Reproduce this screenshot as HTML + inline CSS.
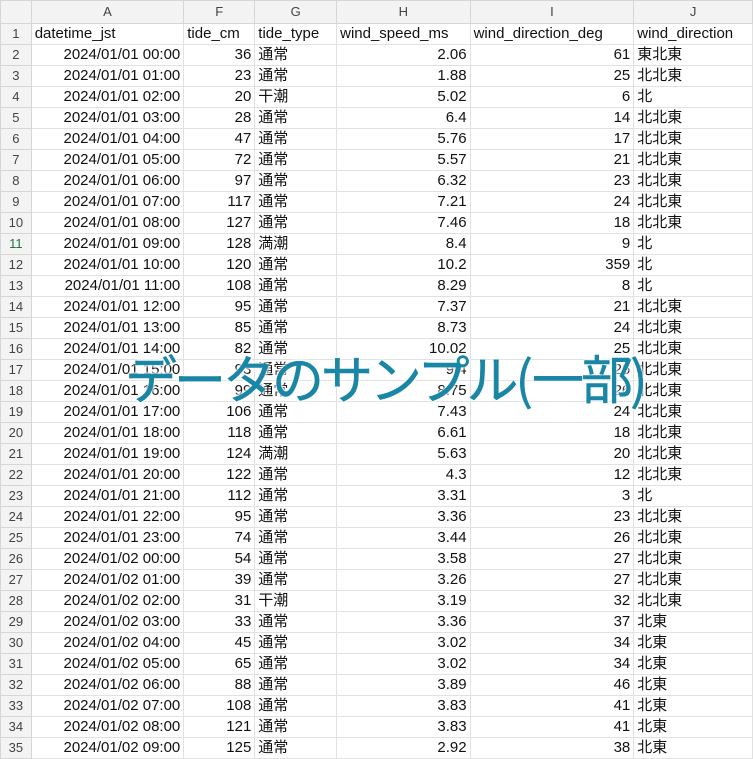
<!DOCTYPE html><html><head><meta charset="utf-8"><style>
body{margin:0;width:753px;height:753px;overflow:hidden;background:#fff;font-family:"Liberation Sans","Noto Sans CJK JP",sans-serif;position:relative}
table{border-collapse:collapse;table-layout:fixed;position:absolute;left:0;top:0}
td{height:20px;padding:0 3px;border:1px solid #e1e1e1;font-size:15px;color:#111;white-space:nowrap;overflow:hidden;line-height:20px}
td.n{background:#f3f3f3;color:#444;font-size:13px;padding:0;border-color:#d6d6d6;text-align:center}
tr.h td{height:22px;background:#f3f3f3;color:#444;font-size:13px;text-align:center;border-color:#d6d6d6}
.r{text-align:right}
.ov{position:absolute;left:125px;top:342px;font-size:52px;color:#1a86a6;font-family:"Noto Sans CJK JP",sans-serif;white-space:nowrap;letter-spacing:-3px;line-height:70px;-webkit-text-stroke:0.5px #1a86a6;text-shadow:0 0 3px #fff,0 0 3px #fff,0 0 4px #fff}
.p{letter-spacing:-1px}
</style></head><body>
<table>
<colgroup><col style="width:32px"><col style="width:155px"><col style="width:72px"><col style="width:83px"><col style="width:135px"><col style="width:166px"><col style="width:120px"></colgroup>
<tr class="h"><td></td><td>A</td><td>F</td><td>G</td><td>H</td><td>I</td><td>J</td></tr>
<tr><td class="n">1</td><td>datetime_jst</td><td>tide_cm</td><td>tide_type</td><td>wind_speed_ms</td><td>wind_direction_deg</td><td>wind_direction</td></tr>
<tr><td class="n">2</td><td class="r">2024/01/01 00:00</td><td class="r">36</td><td>通常</td><td class="r">2.06</td><td class="r">61</td><td>東北東</td></tr>
<tr><td class="n">3</td><td class="r">2024/01/01 01:00</td><td class="r">23</td><td>通常</td><td class="r">1.88</td><td class="r">25</td><td>北北東</td></tr>
<tr><td class="n">4</td><td class="r">2024/01/01 02:00</td><td class="r">20</td><td>干潮</td><td class="r">5.02</td><td class="r">6</td><td>北</td></tr>
<tr><td class="n">5</td><td class="r">2024/01/01 03:00</td><td class="r">28</td><td>通常</td><td class="r">6.4</td><td class="r">14</td><td>北北東</td></tr>
<tr><td class="n">6</td><td class="r">2024/01/01 04:00</td><td class="r">47</td><td>通常</td><td class="r">5.76</td><td class="r">17</td><td>北北東</td></tr>
<tr><td class="n">7</td><td class="r">2024/01/01 05:00</td><td class="r">72</td><td>通常</td><td class="r">5.57</td><td class="r">21</td><td>北北東</td></tr>
<tr><td class="n">8</td><td class="r">2024/01/01 06:00</td><td class="r">97</td><td>通常</td><td class="r">6.32</td><td class="r">23</td><td>北北東</td></tr>
<tr><td class="n">9</td><td class="r">2024/01/01 07:00</td><td class="r">117</td><td>通常</td><td class="r">7.21</td><td class="r">24</td><td>北北東</td></tr>
<tr><td class="n">10</td><td class="r">2024/01/01 08:00</td><td class="r">127</td><td>通常</td><td class="r">7.46</td><td class="r">18</td><td>北北東</td></tr>
<tr><td class="n" style="color:#217346">11</td><td class="r">2024/01/01 09:00</td><td class="r">128</td><td>満潮</td><td class="r">8.4</td><td class="r">9</td><td>北</td></tr>
<tr><td class="n">12</td><td class="r">2024/01/01 10:00</td><td class="r">120</td><td>通常</td><td class="r">10.2</td><td class="r">359</td><td>北</td></tr>
<tr><td class="n">13</td><td class="r">2024/01/01 11:00</td><td class="r">108</td><td>通常</td><td class="r">8.29</td><td class="r">8</td><td>北</td></tr>
<tr><td class="n">14</td><td class="r">2024/01/01 12:00</td><td class="r">95</td><td>通常</td><td class="r">7.37</td><td class="r">21</td><td>北北東</td></tr>
<tr><td class="n">15</td><td class="r">2024/01/01 13:00</td><td class="r">85</td><td>通常</td><td class="r">8.73</td><td class="r">24</td><td>北北東</td></tr>
<tr><td class="n">16</td><td class="r">2024/01/01 14:00</td><td class="r">82</td><td>通常</td><td class="r">10.02</td><td class="r">25</td><td>北北東</td></tr>
<tr><td class="n">17</td><td class="r">2024/01/01 15:00</td><td class="r">93</td><td>通常</td><td class="r">9.4</td><td class="r">26</td><td>北北東</td></tr>
<tr><td class="n">18</td><td class="r">2024/01/01 16:00</td><td class="r">99</td><td>通常</td><td class="r">8.75</td><td class="r">26</td><td>北北東</td></tr>
<tr><td class="n">19</td><td class="r">2024/01/01 17:00</td><td class="r">106</td><td>通常</td><td class="r">7.43</td><td class="r">24</td><td>北北東</td></tr>
<tr><td class="n">20</td><td class="r">2024/01/01 18:00</td><td class="r">118</td><td>通常</td><td class="r">6.61</td><td class="r">18</td><td>北北東</td></tr>
<tr><td class="n">21</td><td class="r">2024/01/01 19:00</td><td class="r">124</td><td>満潮</td><td class="r">5.63</td><td class="r">20</td><td>北北東</td></tr>
<tr><td class="n">22</td><td class="r">2024/01/01 20:00</td><td class="r">122</td><td>通常</td><td class="r">4.3</td><td class="r">12</td><td>北北東</td></tr>
<tr><td class="n">23</td><td class="r">2024/01/01 21:00</td><td class="r">112</td><td>通常</td><td class="r">3.31</td><td class="r">3</td><td>北</td></tr>
<tr><td class="n">24</td><td class="r">2024/01/01 22:00</td><td class="r">95</td><td>通常</td><td class="r">3.36</td><td class="r">23</td><td>北北東</td></tr>
<tr><td class="n">25</td><td class="r">2024/01/01 23:00</td><td class="r">74</td><td>通常</td><td class="r">3.44</td><td class="r">26</td><td>北北東</td></tr>
<tr><td class="n">26</td><td class="r">2024/01/02 00:00</td><td class="r">54</td><td>通常</td><td class="r">3.58</td><td class="r">27</td><td>北北東</td></tr>
<tr><td class="n">27</td><td class="r">2024/01/02 01:00</td><td class="r">39</td><td>通常</td><td class="r">3.26</td><td class="r">27</td><td>北北東</td></tr>
<tr><td class="n">28</td><td class="r">2024/01/02 02:00</td><td class="r">31</td><td>干潮</td><td class="r">3.19</td><td class="r">32</td><td>北北東</td></tr>
<tr><td class="n">29</td><td class="r">2024/01/02 03:00</td><td class="r">33</td><td>通常</td><td class="r">3.36</td><td class="r">37</td><td>北東</td></tr>
<tr><td class="n">30</td><td class="r">2024/01/02 04:00</td><td class="r">45</td><td>通常</td><td class="r">3.02</td><td class="r">34</td><td>北東</td></tr>
<tr><td class="n">31</td><td class="r">2024/01/02 05:00</td><td class="r">65</td><td>通常</td><td class="r">3.02</td><td class="r">34</td><td>北東</td></tr>
<tr><td class="n">32</td><td class="r">2024/01/02 06:00</td><td class="r">88</td><td>通常</td><td class="r">3.89</td><td class="r">46</td><td>北東</td></tr>
<tr><td class="n">33</td><td class="r">2024/01/02 07:00</td><td class="r">108</td><td>通常</td><td class="r">3.83</td><td class="r">41</td><td>北東</td></tr>
<tr><td class="n">34</td><td class="r">2024/01/02 08:00</td><td class="r">121</td><td>通常</td><td class="r">3.83</td><td class="r">41</td><td>北東</td></tr>
<tr><td class="n">35</td><td class="r">2024/01/02 09:00</td><td class="r">125</td><td>通常</td><td class="r">2.92</td><td class="r">38</td><td>北東</td></tr>
</table>
<div class="ov">データのサンプル<span class="p">(</span>一部<span class="p">)</span></div>
</body></html>
